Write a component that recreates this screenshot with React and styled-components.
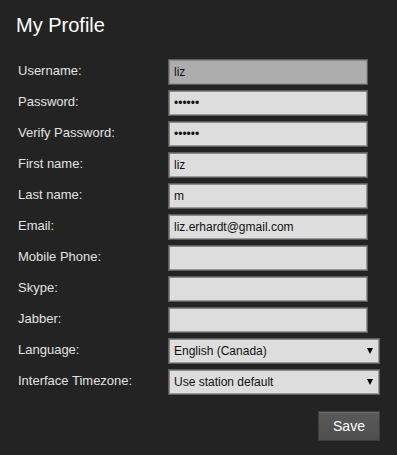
import { Fragment } from "react";
import styled, { createGlobalStyle } from "styled-components";

const Global = createGlobalStyle`
  body {
    margin: 0;
    background: #232323;
    font-family: "Liberation Sans", Arial, sans-serif;
  }
`;

const Page = styled.div`
  width: 397px;
  height: 455px;
  background: #232323;
  padding: 14px 17px 0 18px;
  box-sizing: border-box;
`;

const Title = styled.h1`
  margin: 0 0 0 -2px;
  height: 45px;
  font-weight: normal;
  font-size: 20px;
  line-height: 23px;
  color: #ffffff;
`;

const Form = styled.div`
  display: grid;
  grid-template-columns: 150px 1fr;
  row-gap: 5px;
  align-items: center;
`;

const Label = styled.label`
  font-size: 13px;
  color: #e2e2e2;
  padding-bottom: 3px;
`;

const Field = styled.div`
  box-sizing: border-box;
  width: ${(p) => (p.$wide ? "212px" : "200px")};
  height: 26px;
  border: 1px solid #5c5c5c;
  box-shadow: inset 1px 1px 0 #8a8a8a, inset -1px -1px 0 #9a9a9a;
  background: ${(p) => (p.$disabled ? "#adadad" : "#dddddd")};
  display: flex;
  align-items: center;
  padding: 0 6px 0 5px;
  font-size: 12px;
  color: #111;
`;

const Dots = styled.span`
  font-size: 12px;
`;

const Value = styled.span`
  flex: 1;
`;

const Arrow = styled.span`
  width: 0;
  height: 0;
  border-left: 3px solid transparent;
  border-right: 3px solid transparent;
  border-top: 6px solid #000;
`;

const Actions = styled.div`
  display: flex;
  justify-content: flex-end;
  padding-top: 16px;
`;

const SaveButton = styled.button`
  width: 62px;
  height: 30px;
  background: linear-gradient(#5a5a5a, #4e4e4e);
  border: 1px solid #3e3e3e;
  box-shadow: inset 0 1px 0 #6a6a6a;
  color: #ffffff;
  font-family: "Liberation Sans", Arial, sans-serif;
  font-size: 14px;
  padding: 0;
`;

const fields = [
  { label: "Username:", value: "liz", disabled: true },
  { label: "Password:", password: true },
  { label: "Verify Password:", password: true },
  { label: "First name:", value: "liz" },
  { label: "Last name:", value: "m" },
  { label: "Email:", value: "liz.erhardt@gmail.com" },
  { label: "Mobile Phone:", value: "" },
  { label: "Skype:", value: "" },
  { label: "Jabber:", value: "" },
];

const selects = [
  { label: "Language:", value: "English (Canada)" },
  { label: "Interface Timezone:", value: "Use station default" },
];

export default function App() {
  return (
    <Page>
      <Global />
      <Title>My Profile</Title>
      <Form>
        {fields.map((f) => (
          <Fragment key={f.label}>
            <Label>{f.label}</Label>
            <Field $disabled={f.disabled}>
              {f.password ? <Dots>••••••</Dots> : <Value>{f.value}</Value>}
            </Field>
          </Fragment>
        ))}
        {selects.map((s) => (
          <Fragment key={s.label}>
            <Label>{s.label}</Label>
            <Field $wide>
              <Value>{s.value}</Value>
              <Arrow />
            </Field>
          </Fragment>
        ))}
      </Form>
      <Actions>
        <SaveButton>Save</SaveButton>
      </Actions>
    </Page>
  );
}
